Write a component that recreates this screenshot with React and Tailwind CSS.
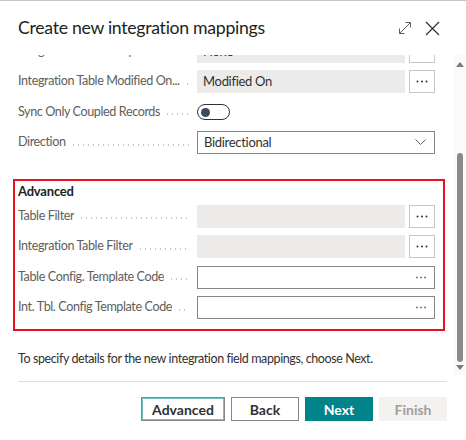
import React from 'react';

const FONT = "font-['Lato','Noto_Sans',sans-serif]";

function Dots({ className = '' }) {
  return (
    <svg width="12" height="3" viewBox="0 0 12 3" className={className}>
      <circle cx="1.5" cy="1.5" r="1" fill="currentColor" />
      <circle cx="6" cy="1.5" r="1" fill="currentColor" />
      <circle cx="10.5" cy="1.5" r="1" fill="currentColor" />
    </svg>
  );
}

function Row({ label, children }) {
  return (
    <div className="flex h-[30.5px] items-center">
      <div className="flex w-[179px] shrink-0 items-center overflow-hidden pr-[8px]">
        <span className="truncate whitespace-nowrap text-[12.6px] tracking-[-0.4px] text-[#605e5c]">{label}</span>
        <span className="ml-[5px] mt-[4px] h-[2px] flex-1 bg-[radial-gradient(circle,#c8c6c4_0.8px,transparent_1.1px)] bg-[length:5px_2px] bg-repeat-x" />
      </div>
      <div className="flex flex-1 items-center">{children}</div>
    </div>
  );
}

function ReadOnly({ value, button = true, hideDots = false }) {
  return (
    <>
      <div className="flex h-[23px] flex-1 items-center bg-[#edebe9] px-[6px] text-[13px] tracking-[-0.3px] text-[#323130]">{value}</div>
      {button && (
        <button className="ml-[4px] flex h-[23px] w-[26px] items-center justify-center border border-[#c8c6c4] bg-white text-[#323130]">
          {!hideDots && <Dots />}
        </button>
      )}
    </>
  );
}

function Lookup() {
  return (
    <div className="flex h-[23px] flex-1 items-center justify-end border border-[#8a8886] bg-white pr-[7px] text-[#605e5c]">
      <Dots className="scale-90" />
    </div>
  );
}

export default function App() {
  return (
    <div className={`${FONT} flex h-[440px] w-[466px] flex-col overflow-hidden border-t border-[#c8c6c4] bg-white`}>
      {/* header */}
      <div className="flex h-[54px] shrink-0 items-center pl-[18px] pr-[26px]">
        <h1 className="flex-1 text-[17.7px] tracking-[-0.3px] text-[#201f1e]">Create new integration mappings</h1>
        <svg width="16" height="16" viewBox="0 0 16 16" className="mr-[12px] text-[#605e5c]" fill="none" stroke="currentColor" strokeWidth="1">
          <path d="M2.5 13.5 13.5 2.5M2.5 13.5V8.5M2.5 13.5H7.5M13.5 2.5H8.5M13.5 2.5V7.5" />
        </svg>
        <svg width="15" height="15" viewBox="0 0 15 15" className="text-[#323130]" fill="none" stroke="currentColor" strokeWidth="1.2">
          <path d="M1 1 14 14M14 1 1 14" />
        </svg>
      </div>

      {/* body */}
      <div className="flex h-[320px] shrink-0">
        <div className="flex-1 overflow-hidden">
          <div className="-mt-[19px] pl-[18px] pr-[18px]">
            <Row label="Integration Table Unique Identi...">
              <ReadOnly value="None" hideDots />
            </Row>
            <Row label="Integration Table Modified On...">
              <ReadOnly value="Modified On" />
            </Row>
            <Row label="Sync Only Coupled Records">
              <div className="flex h-[16px] w-[33px] items-center rounded-full border border-[#323130] pl-[3px]">
                <span className="h-[9px] w-[9px] rounded-full bg-[#3b4a5f]" />
              </div>
            </Row>
            <Row label="Direction">
              <div className="flex h-[23px] flex-1 items-center justify-between border border-[#8a8886] bg-white pl-[6px] pr-[8px] text-[13px] tracking-[-0.3px] text-[#323130]">
                <span>Bidirectional</span>
                <svg width="11" height="7" viewBox="0 0 11 7" fill="none" stroke="#605e5c" strokeWidth="1">
                  <path d="M0.5 0.5 5.5 5.5 10.5 0.5" />
                </svg>
              </div>
            </Row>
          </div>

          <div className="ml-[13px] mr-[8px] mt-[21px] border-2 border-[#e81123] pb-[6px] pl-[3px] pr-[8px]">
            <div className="h-[20px] text-[13px] font-bold leading-[20px] tracking-[-0.2px] text-[#201f1e]">Advanced</div>
            <Row label="Table Filter">
              <ReadOnly value="" />
            </Row>
            <Row label="Integration Table Filter">
              <ReadOnly value="" />
            </Row>
            <Row label="Table Config. Template Code">
              <Lookup />
            </Row>
            <Row label="Int. Tbl. Config Template Code">
              <Lookup />
            </Row>
          </div>

          <p className="ml-[18px] mt-[18px] whitespace-nowrap text-[12.5px] leading-[20px] tracking-[-0.4px] text-[#323130]">
            To specify details for the new integration field mappings, choose Next.
          </p>
        </div>

        {/* scrollbar */}
        <div className="flex w-[13px] shrink-0 flex-col items-center bg-[#fafafa] pt-[7px]">
          <svg width="8" height="5" viewBox="0 0 8 5"><path d="M4 0 8 5H0Z" fill="#7a7a7a" /></svg>
          <div className="mt-[86px] h-[209px] w-[6px] rounded-full bg-[#8a8a8a]" />
          <svg width="8" height="5" viewBox="0 0 8 5" className="mt-[3px]"><path d="M0 0H8L4 5Z" fill="#7a7a7a" /></svg>
        </div>
      </div>

      {/* footer */}
      <div className="ml-[18px] mr-[19px] mt-[6px] border-t border-[#e1dfdd] pt-[15px]">
        <div className="flex justify-end gap-[6px] text-[14px] font-bold">
          <button className="h-[24px] w-[84px] border border-[#8a8886] bg-white text-[#323130] shadow-[inset_0_0_0_1px_#6fc1c3]">Advanced</button>
          <button className="h-[24px] w-[68px] border border-[#8a8886] bg-white text-[#323130]">Back</button>
          <button className="h-[24px] w-[68px] bg-[#008489] text-white">Next</button>
          <button className="h-[24px] w-[68px] bg-[#f3f2f1] text-[#a19f9d]">Finish</button>
        </div>
      </div>
    </div>
  );
}
